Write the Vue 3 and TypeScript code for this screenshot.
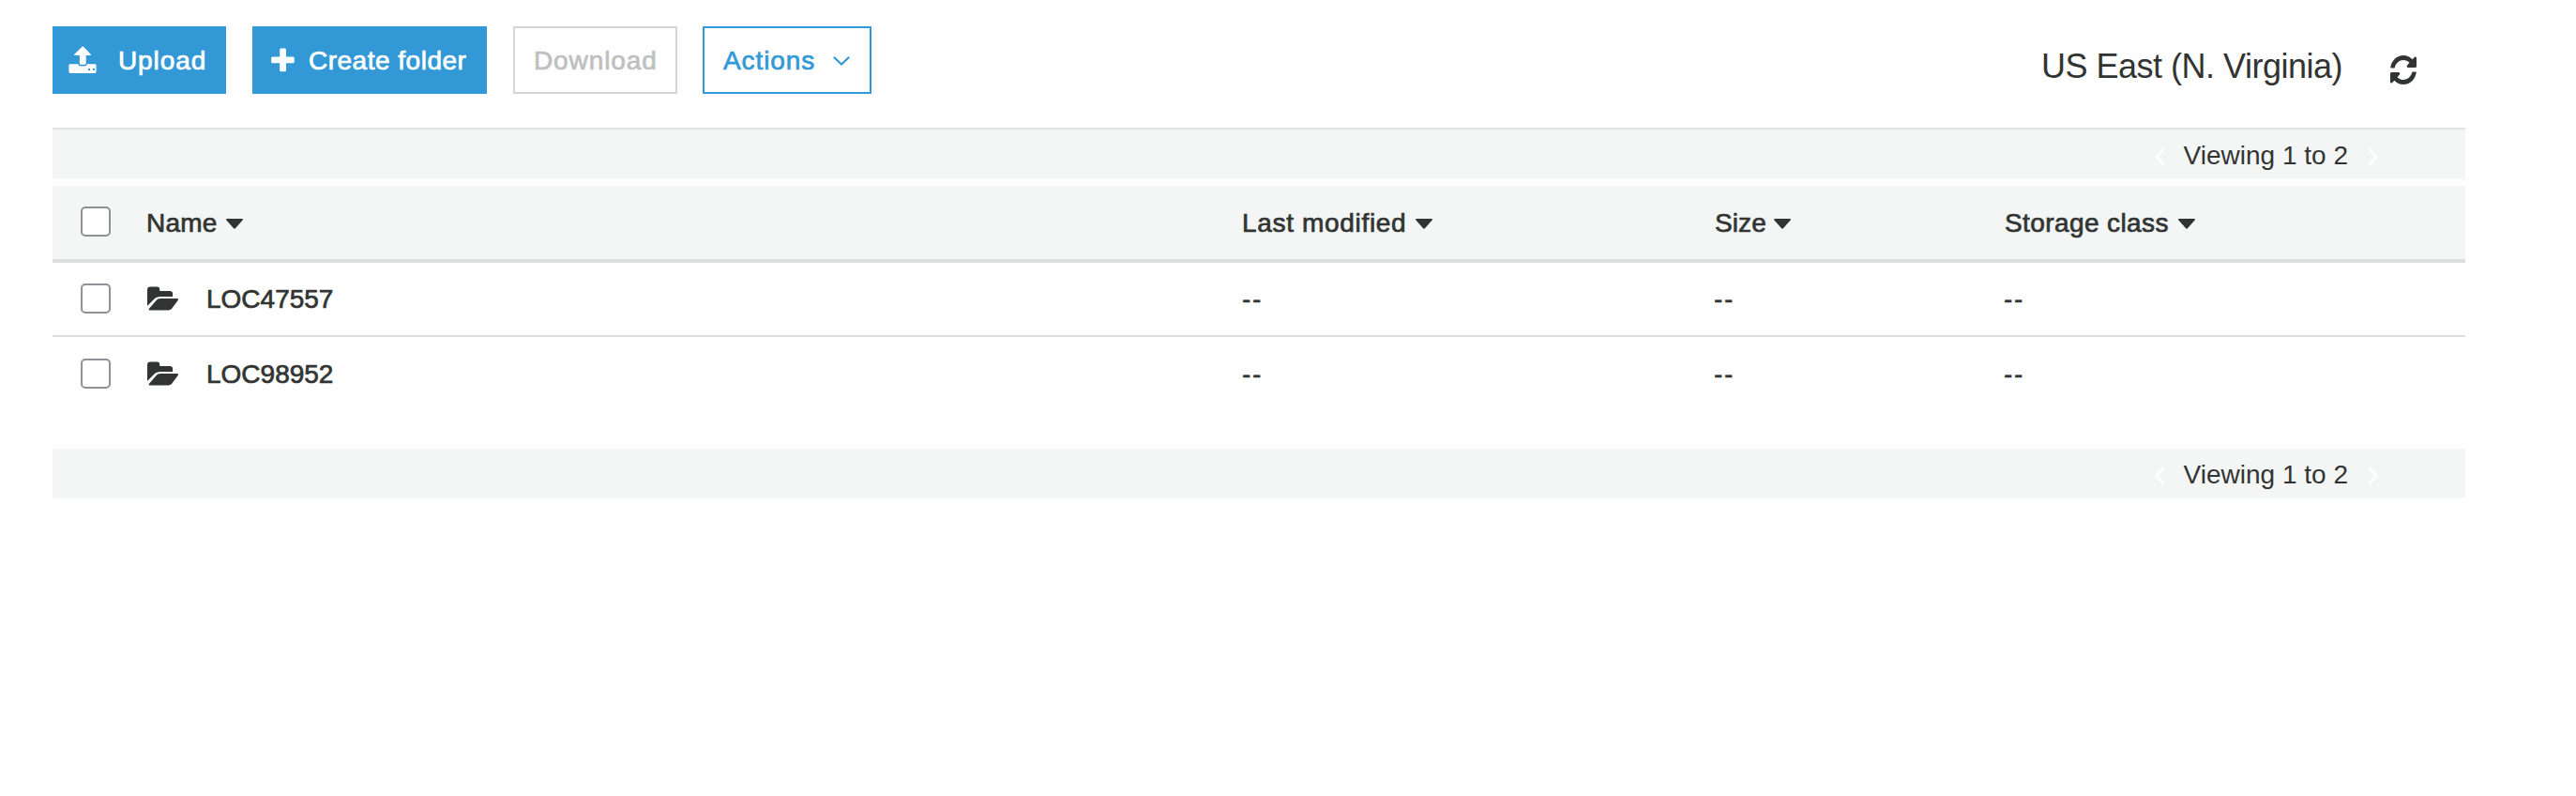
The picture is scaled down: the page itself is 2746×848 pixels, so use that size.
<script setup lang="ts">
interface Column { key: string; label: string }
const columns: Column[] = [
  { key: 'modified', label: 'Last modified' },
  { key: 'size', label: 'Size' },
  { key: 'storage', label: 'Storage class' },
]
const folders: string[] = ['LOC47557', 'LOC98952']
</script>

<template>
  <main class="browser">
    <header class="toolbar">
      <div class="buttons">
        <button class="btn primary upload">
          <svg width="30" height="30" viewBox="0 0 30 30" fill="currentColor">
            <path d="M14.600.8c.5-.5 1-.5 1.400 0l7.700 8c.6.700.3 1.300-.6 1.300h-4.400v8.300c0 .8-.6 1.300-1.300 1.300h-4.200c-.8 0-1.300-.5-1.300-1.300v-8.300H6.900c-.9 0-1.200-.6-.6-1.300z" />
            <path fill-rule="evenodd" d="M2 19.300h8.400c.3 1.400 1.300 2.200 2.700 2.200h4c1.300 0 2.400-.8 2.700-2.200H28c1 0 1.600.7 1.600 1.600v6.400c0 1-.7 1.600-1.600 1.600H2c-1 0-1.600-.7-1.600-1.600v-6.400c0-.9.6-1.600 1.600-1.600zM21 24v2h2v-2zm5 0v2h2v-2z" />
          </svg>
          <span>Upload</span>
        </button>
        <button class="btn primary create">
          <svg width="25" height="26" viewBox="0 0 25 26" fill="currentColor">
            <path d="M10.800.5h3.600c1 0 1.600.6 1.600 1.600v7.500h7.200c1 0 1.600.6 1.600 1.600v3.500c0 1-.6 1.600-1.600 1.600H16v7.400c0 1-.6 1.600-1.600 1.600h-3.600c-1 0-1.600-.6-1.600-1.600v-7.400H1.700c-1 0-1.600-.6-1.600-1.600v-3.500c0-1 .6-1.600 1.600-1.600h7.500V2.100c0-1 .6-1.600 1.600-1.600z" />
          </svg>
          <span>Create folder</span>
        </button>
        <button class="btn download" disabled><span>Download</span></button>
        <button class="btn actions">
          <span>Actions</span>
          <svg width="18" height="12" viewBox="0 0 18 12" fill="none" stroke="currentColor" stroke-width="2.200">
            <path d="M.8 1.800 9 9.600l8.200-7.800" />
          </svg>
        </button>
      </div>
      <div class="region">
        <span>US East (N. Virginia)</span>
        <svg width="28" height="31" viewBox="8 8 496 496" preserveAspectRatio="none" fill="currentColor">
          <path d="M370.720 133.280C339.458 104.008 298.888 87.962 255.848 88c-77.458.068-144.328 53.178-162.791 126.850-1.344 5.363-6.122 9.150-11.651 9.150H24.103c-7.498 0-13.194-6.807-11.807-14.176C33.933 94.924 134.813 8 256 8c66.448 0 126.791 26.136 171.315 68.685L463.030 40.970C478.149 25.851 504 36.559 504 57.941V192c0 13.255-10.745 24-24 24H345.941c-21.382 0-32.090-25.851-16.971-40.971l41.750-41.749zM32 296h134.059c21.382 0 32.090 25.851 16.971 40.971l-41.750 41.750c31.262 29.273 71.835 45.319 114.876 45.280 77.418-.07 144.315-53.144 162.787-126.849 1.344-5.363 6.122-9.150 11.651-9.150h57.304c7.498 0 13.194 6.807 11.807 14.176C478.067 417.076 377.187 504 256 504c-66.448 0-126.791-26.136-171.315-68.685L48.970 471.030C33.851 486.149 8 475.441 8 454.059V320c0-13.255 10.745-24 24-24z" />
        </svg>
      </div>
    </header>

    <nav v-for="place in ['top', 'bottom']" :key="place" class="pager" :class="place">
      <svg width="11" height="20" viewBox="0 0 11 20" fill="none" stroke="#fff" stroke-width="2.600"><path d="M9.800 1.200 1.600 10l8.200 8.800" /></svg>
      <span>Viewing 1 to 2</span>
      <svg width="11" height="20" viewBox="0 0 11 20" fill="none" stroke="#fff" stroke-width="2.600"><path d="M1.200 1.200 9.400 10l-8.200 8.800" /></svg>
    </nav>

    <section class="table">
      <div class="row head">
        <i class="check" />
        <div class="cell name">
          <span>Name</span>
          <svg class="caret" width="18" height="11" viewBox="0 0 18 11"><path d="M1 0h16c1 0 1.300.8.700 1.400L9.900 10.300c-.6.600-1.200.6-1.800 0L.3 1.400C-.3.800 0 0 1 0z" /></svg>
        </div>
        <div v-for="c in columns" :key="c.key" class="cell" :class="c.key">
          <span>{{ c.label }}</span>
          <svg class="caret" width="18" height="11" viewBox="0 0 18 11"><path d="M1 0h16c1 0 1.300.8.700 1.400L9.900 10.300c-.6.600-1.200.6-1.800 0L.3 1.400C-.3.800 0 0 1 0z" /></svg>
        </div>
      </div>
      <div v-for="name in folders" :key="name" class="row item">
        <i class="check" />
        <div class="cell folder">
          <svg width="33" height="26" viewBox="0 0 33 26" fill="currentColor">
            <path d="M0 21V3.500C0 1.500 1.200.4 3 .4h7.500c1.700 0 2.700 1 2.700 2.700v2h11c1.800 0 2.900 1.100 2.900 2.900v3H14.200c-3.200 0-5 .8-7 2.800z" />
            <path d="M1.800 24 9.400 15.200c1.300-1.500 2.700-2.200 4.800-2.200h17.600c1.300 0 1.600.9.900 1.900l-6.200 8.400c-1.200 1.500-2.200 2.100-4 2.100H2.600c-1.200 0-1.500-.6-.8-1.400z" />
          </svg>
          <span>{{ name }}</span>
        </div>
        <div v-for="c in columns" :key="c.key" class="cell value"><span>--</span></div>
      </div>
    </section>
  </main>
</template>

<style>
body { margin: 0; background: #fefefe; }
</style>

<style scoped>
.browser {
  display: flex;
  flex-direction: column;
  box-sizing: border-box;
  width: 2628px;
  padding: 28px 0 0 56px;
  color: #313432;
  font: 28px/34px "Liberation Sans", Arial, sans-serif;
  white-space: nowrap;
}
svg { display: block; flex: none; }
span { padding-top: 2px; }
.toolbar { display: flex; justify-content: space-between; height: 108px; }
.buttons { display: flex; gap: 28px; }
.btn {
  display: flex;
  align-items: center;
  box-sizing: border-box;
  height: 72px;
  margin: 0;
  padding: 0;
  border: 2px solid #3299d6;
  background: #fefefe;
  color: #3299d6;
  font: inherit;
  letter-spacing: 0.9px;
  -webkit-text-stroke: 0.7px currentColor;
}
.btn svg { -webkit-text-stroke: 0; }
.primary { background: #3299d6; color: #fff; }
.upload { width: 185px; padding-left: 15px; gap: 23px; }
.create { width: 250px; padding-left: 18px; gap: 15px; letter-spacing: 0.5px; }
.download { width: 175px; padding-left: 20px; border-color: #d6d6d6; color: #bebfbf; }
.actions { width: 180px; margin-left: -1px; padding-left: 20px; gap: 19px; }
.actions svg { margin-top: 2px; }
.region {
  display: flex;
  align-items: center;
  gap: 51px;
  height: 88px;
  padding-right: 52px;
  font-size: 36px;
  letter-spacing: -0.5px;
}
.region span { padding: 0 0 2px; }
.region svg { margin-top: 4px; }
.pager {
  display: flex;
  align-items: center;
  justify-content: flex-end;
  box-sizing: border-box;
  height: 53px;
  padding-right: 93px;
  background: #f4f6f6;
}
.pager svg { margin-top: 5px; }
.pager span { margin: 0 21px 0 20px; }
.top { order: 1; height: 55px; border-top: 2px solid #e2e4e4; }
.table { order: 2; margin-top: 7px; height: 280px; }
.bottom { order: 3; }
.row {
  display: grid;
  grid-template-columns: 101px 1168px 503px 309px 1fr;
  align-items: center;
  box-sizing: border-box;
}
.head { height: 82px; border-bottom: 4px solid #dcdddd; background: #f4f6f6; }
.item { height: 79px; padding-bottom: 1px; border-bottom: 2px solid #dcdddd; }
.item:last-child { border: 0; height: 78px; padding: 0; }
.check {
  box-sizing: border-box;
  width: 32px;
  height: 32px;
  margin-left: 30px;
  border: 2px solid #8c9396;
  border-radius: 5px;
  background: #fff;
}
.head .check { margin-bottom: 2px; }
.cell { display: flex; align-items: center; }
.head .cell, .folder { letter-spacing: 0.4px; -webkit-text-stroke: 0.7px currentColor; }
.head .name { margin-left: -1px; letter-spacing: 0.2px; }
.head .name .caret { margin-left: 9px; }
.head .modified { margin-left: -1px; letter-spacing: 0.68px; }
.head .size { letter-spacing: 0.1px; }
.head .size .caret { margin-left: 8px; }
.folder { letter-spacing: 0; }
.caret { margin: 3px 0 0 10px; fill: #313432; }
.folder svg { margin-right: 30px; }
.value { margin-left: -1px; letter-spacing: 1.600px; -webkit-text-stroke: 0.4px currentColor; }
.value span { padding-top: 2px; }
</style>
